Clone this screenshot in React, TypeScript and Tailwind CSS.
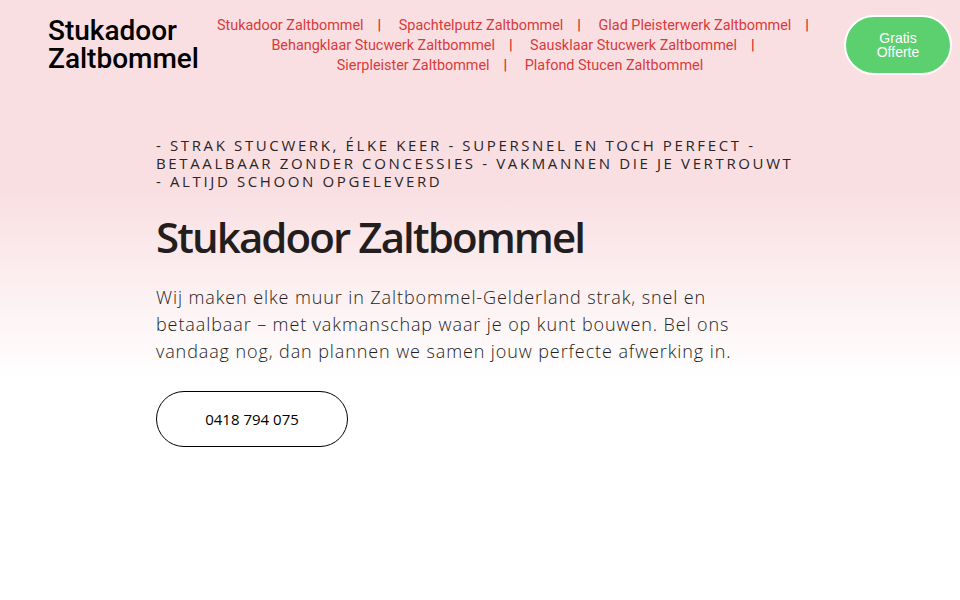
import React from "react";

const links = [
  "Stukadoor Zaltbommel",
  "Spachtelputz Zaltbommel",
  "Glad Pleisterwerk Zaltbommel",
  "Behangklaar Stucwerk Zaltbommel",
  "Sausklaar Stucwerk Zaltbommel",
  "Sierpleister Zaltbommel",
  "Plafond Stucen Zaltbommel",
];

export default function App() {
  return (
    <div className="min-h-[600px] w-full bg-[linear-gradient(to_bottom,#f9dfe2_0px,#f9dfe2_190px,#ffffff_380px,#ffffff_100%)]">
      <header className="flex items-center h-[90px] pl-[48px] pr-[8px]" style={{ fontFamily: "Roboto, 'Liberation Sans', sans-serif" }}>
        <div className="text-[28px] leading-[28px] font-medium text-black w-[160px] shrink-0">
          Stukadoor Zaltbommel
        </div>
        <nav className="w-[616px] shrink-0 ml-[4px] text-center text-[14.4px] leading-[20px] text-[#d93a3a] pt-[2px]">
          {links.map((l, i) => (
            <React.Fragment key={l}>
              <span className="inline-block whitespace-nowrap">
                {l}
                {i !== 6 ? (
                  <span className="inline-block px-[14px] font-bold text-[#d42a2a]">|</span>
                ) : null}
              </span>{" "}
            </React.Fragment>
          ))}
        </nav>
        <button
          className="ml-auto w-[108px] h-[60px] shrink-0 rounded-full bg-[#5ccf6f] border-2 border-white text-white text-[14px] leading-[14.5px]"
          style={{ fontFamily: "'Liberation Sans', Arial, sans-serif" }}
        >
          Gratis
          <br />
          Offerte
        </button>
      </header>
      <main className="mx-auto w-[648px] pt-[46px]" style={{ fontFamily: "'Open Sans', 'Noto Sans', sans-serif" }}>
        <p className="w-[644px] uppercase text-[15px] leading-[18px] tracking-[0.175em] text-[#2b2424]">
          - Strak stucwerk, élke keer - Supersnel en toch perfect - Betaalbaar zonder concessies - Vakmannen die je vertrouwt - Altijd schoon opgeleverd
        </p>
        <h1 className="mt-[20px] text-[42px] leading-[54px] font-semibold tracking-[-0.045em] text-[#231d1d]">
          Stukadoor Zaltbommel
        </h1>
        <p className="mt-[20px] text-[18px] leading-[27px] text-[#231d1d] font-light tracking-[0.9px]">
          Wij maken elke muur in Zaltbommel-Gelderland strak, snel en betaalbaar – met vakmanschap waar je op kunt bouwen. Bel ons vandaag nog, dan plannen we samen jouw perfecte afwerking in.
        </p>
        <button className="mt-[26px] w-[192px] h-[56px] rounded-full border border-black text-[15px] font-medium text-black">
          0418 794 075
        </button>
      </main>
    </div>
  );
}
